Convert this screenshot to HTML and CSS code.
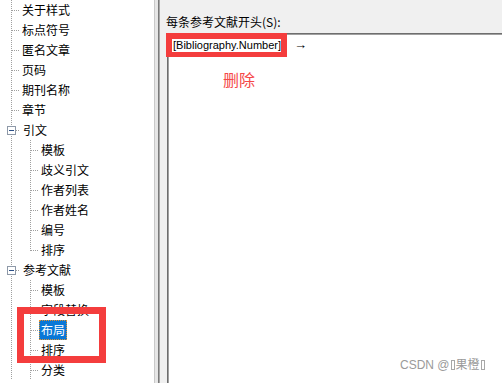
FILE: index.html
```html
<!DOCTYPE html>
<html lang="zh">
<head>
<meta charset="utf-8">
<title>样式编辑</title>
<link rel="stylesheet" href="styles.css">
</head>
<body>
<div class="page">
  <div class="tree">
    <div class="row t1"><span class="label">关于样式</span></div>
    <div class="row t1"><span class="label">标点符号</span></div>
    <div class="row t1"><span class="label">匿名文章</span></div>
    <div class="row t1"><span class="label">页码</span></div>
    <div class="row t1"><span class="label">期刊名称</span></div>
    <div class="row t1"><span class="label">章节</span></div>
    <div class="row t1 exp"><span class="box"></span><span class="label">引文</span></div>
    <div class="row t2"><span class="label">模板</span></div>
    <div class="row t2"><span class="label">歧义引文</span></div>
    <div class="row t2"><span class="label">作者列表</span></div>
    <div class="row t2"><span class="label">作者姓名</span></div>
    <div class="row t2"><span class="label">编号</span></div>
    <div class="row t2 last"><span class="label">排序</span></div>
    <div class="row t1 exp"><span class="box"></span><span class="label">参考文献</span></div>
    <div class="row t2"><span class="label">模板</span></div>
    <div class="row t2"><span class="label">字段替换</span></div>
    <div class="row t2"><span class="label selected">布局</span></div>
    <div class="row t2"><span class="label">排序</span></div>
    <div class="row t2"><span class="label">分类</span></div>
  </div>
  <div class="splitter"></div>
  <div class="panel">
    <div class="caption">每条参考文献开头(S):</div>
    <div class="editor">
      <div class="line"><span class="field">[Bibliography.Number]</span><span class="tab">→</span></div>
      <div class="note">删除</div>
    </div>
  </div>
  <div class="mark mark-field"></div>
  <div class="mark mark-tree"></div>
  <div class="watermark">CSDN @<span class="tofu"></span>果橙<span class="tofu"></span></div>
</div>
</body>
</html>
```

FILE: styles.css
```css
html, body {
  margin: 0;
  padding: 0;
  width: 502px;
  height: 383px;
  overflow: hidden;
  background: #f0f0f0;
}

.page {
  position: relative;
  display: flex;
  width: 502px;
  height: 383px;
  font-family: "Noto Sans CJK SC", "Liberation Sans", sans-serif;
  font-size: 12px;
  color: #000;
}

/* ---------- tree ---------- */
.tree {
  --dots-v: repeating-linear-gradient(to bottom, #a0a0a0 0 1px, transparent 1px 2px);
  --dots-h: repeating-linear-gradient(to right, #a0a0a0 0 1px, transparent 1px 2px);
  width: 154px;
  flex: none;
  background: #fff;
  border-right: 1px solid #c9c9c9;
  overflow: hidden;
}

.row {
  height: 20px;
  display: flex;
  align-items: center;
  white-space: nowrap;
}

.t1 {
  background:
    var(--dots-v) 11px 0 / 1px 100% no-repeat,
    var(--dots-h) 12px 10px / 8px 1px no-repeat;
}

.t1.exp {
  background:
    var(--dots-v) 11px 0 / 1px 100% no-repeat,
    var(--dots-h) 16px 10px / 4px 1px no-repeat;
}

.t2 {
  background:
    var(--dots-v) 11px 0 / 1px 100% no-repeat,
    var(--dots-v) 30px 0 / 1px 100% no-repeat,
    var(--dots-h) 31px 10px / 8px 1px no-repeat;
}

.t2.last {
  background:
    var(--dots-v) 11px 0 / 1px 100% no-repeat,
    var(--dots-v) 30px 0 / 1px 11px no-repeat,
    var(--dots-h) 31px 10px / 8px 1px no-repeat;
}

.label {
  display: inline-block;
  height: 20px;
  line-height: 20px;
  padding: 0 2px;
  box-sizing: border-box;
}

.t1 .label { margin-left: 20px; }
.t1.exp .label { margin-left: 5px; }
.t2 .label { margin-left: 39px; }

.box {
  width: 9px;
  height: 9px;
  margin-left: 7px;
  box-sizing: border-box;
  border: 1px solid #8e99a8;
  background: linear-gradient(#2c4f86, #2c4f86) 1px 3px / 5px 1px no-repeat, #fff;
}

.label.selected {
  background: #0a77d6;
  color: #fff;
  outline: 1px dotted #e6922c;
  outline-offset: -1px;
}

/* ---------- splitter & panel ---------- */
.splitter {
  width: 3px;
  flex: none;
  background: #e6e6e6;
}

.panel {
  flex: 1;
  display: flex;
  flex-direction: column;
  border-left: 1px solid #7a7a7a;
  box-shadow: inset 1px 0 0 #a8a8a8;
  background: #f0f0f0;
  padding: 14px 0 0 8px;
  min-width: 0;
}

.caption {
  line-height: 16px;
  height: 16px;
  margin-left: -1px;
  white-space: nowrap;
}

.editor {
  flex: 1;
  margin-top: 3px;
  background: #fff;
  border-top: 1px solid #6e6e6e;
  border-left: 1px solid #6e6e6e;
  box-shadow: inset 1px 1px 0 #a0a0a0;
  padding: 1px 0 0 5px;
}

.line {
  height: 20px;
  line-height: 20px;
  font-family: "Liberation Sans", sans-serif;
  font-size: 11px;
  white-space: nowrap;
}

.tab {
  margin-left: 13px;
  font-size: 13px;
}

.note {
  margin-top: 14px;
  padding-left: 50px;
  height: 20px;
  line-height: 20px;
  font-size: 16px;
  color: #f54848;
}

/* ---------- annotation overlays ---------- */
.mark {
  position: absolute;
  box-sizing: border-box;
  border: 7px solid #f43d3d;
}

.mark-field {
  left: 166px;
  top: 33px;
  width: 121px;
  height: 24px;
  border-width: 6px 6px 5px 6px;
}

.mark-tree {
  left: 17px;
  top: 307px;
  width: 89px;
  height: 56px;
}

.watermark {
  position: absolute;
  left: 400px;
  top: 357px;
  line-height: 16px;
  font-family: "Liberation Sans", "Noto Sans CJK SC", sans-serif;
  font-size: 12px;
  color: #9a9a9a;
  white-space: nowrap;
}

.tofu {
  display: inline-block;
  width: 4px;
  height: 10px;
  box-sizing: border-box;
  border: 1px solid #a8a8a8;
  margin: 0 1px;
  vertical-align: -1px;
}
```
